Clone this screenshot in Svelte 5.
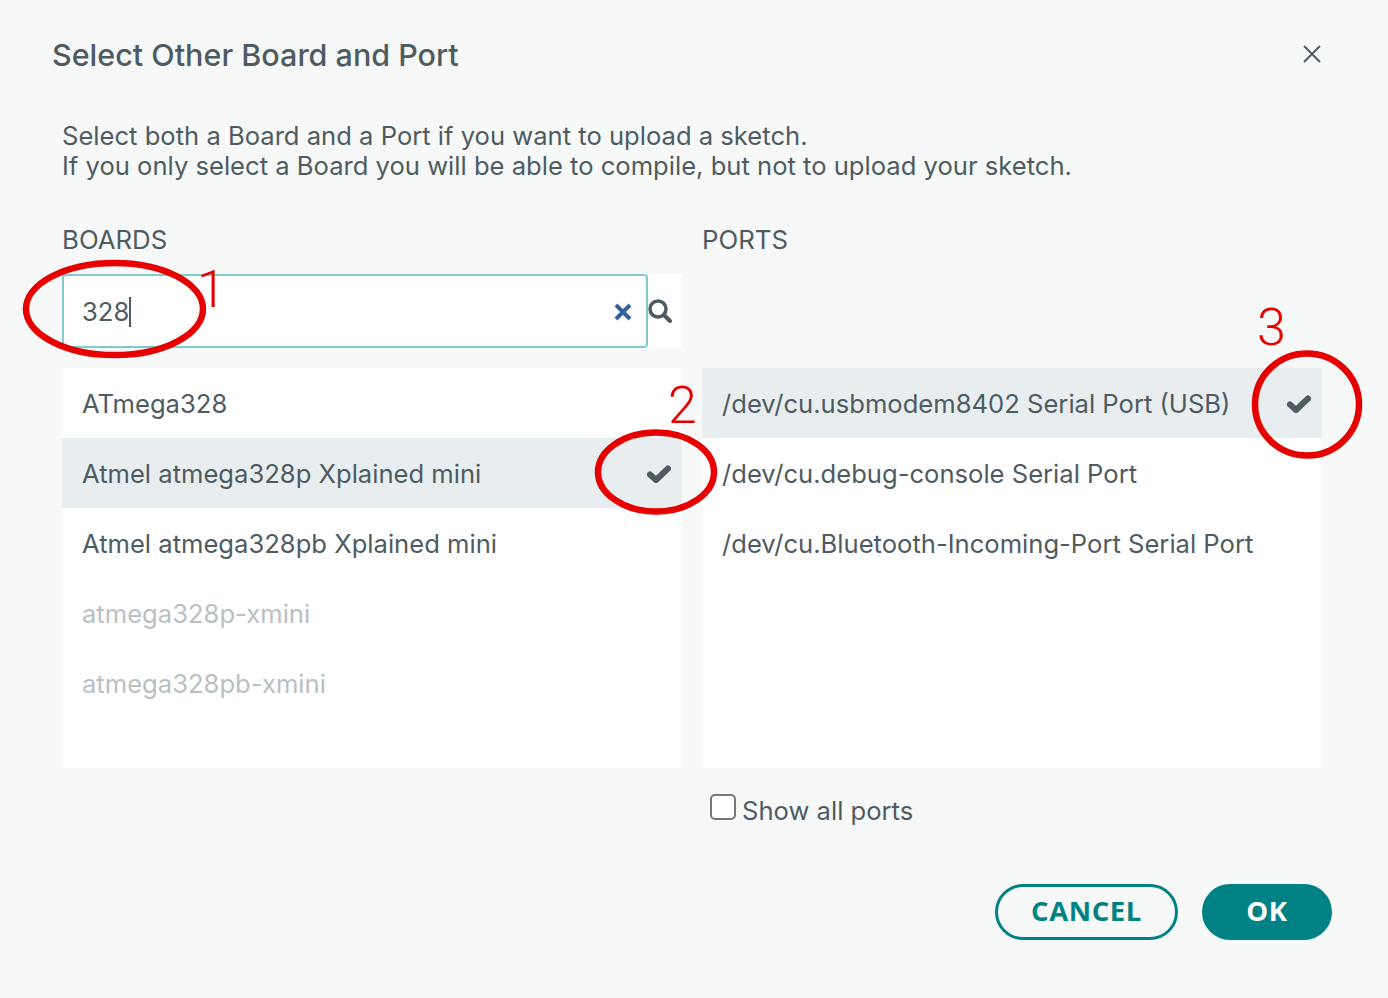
<script>
  const boards = [
    { name: "ATmega328" },
    { name: "Atmel atmega328p Xplained mini", selected: true },
    { name: "Atmel atmega328pb Xplained mini" },
    { name: "atmega328p-xmini", missing: true },
    { name: "atmega328pb-xmini", missing: true },
  ];
  const ports = [
    { name: "/dev/cu.usbmodem8402 Serial Port (USB)", selected: true },
    { name: "/dev/cu.debug-console Serial Port" },
    { name: "/dev/cu.Bluetooth-Incoming-Port Serial Port" },
  ];
  const marks = [
    { label: "1", x: 197, y: 307, cx: 114.5, cy: 309, rx: 88.5, ry: 46 },
    { label: "2", x: 668, y: 423, cx: 656, cy: 472, rx: 58, ry: 39.5 },
    { label: "3", x: 1257, y: 345, cx: 1307, cy: 404.5, rx: 52, ry: 51 },
  ];
</script>

{#snippet check()}
  <svg class="check" viewBox="0 0 24 18" aria-hidden="true">
    <path d="M3 9.5 9 15 21 3.5" fill="none" stroke="currentColor" stroke-width="6" stroke-linejoin="round" stroke-linecap="round" />
  </svg>
{/snippet}

<div class="dialog">
  <header class="head">
    <h1>Select Other Board and Port</h1>
    <button type="button" class="close" aria-label="Close">
      <svg viewBox="0 0 20 20" aria-hidden="true">
        <path d="M2 2 18 18M18 2 2 18" fill="none" stroke="currentColor" stroke-width="2" />
      </svg>
    </button>
  </header>

  <div class="body">
    <p class="intro">
      Select both a Board and a Port if you want to upload a sketch.<br />
      If you only select a Board you will be able to compile, but not to upload your sketch.
    </p>

    <div class="columns">
      <section class="col">
        <h2>BOARDS</h2>
        <div class="search">
          <div class="field">
            <span class="value">328</span>
            <svg class="clear" viewBox="0 0 18 18" aria-hidden="true">
              <path d="M2 2 16 16M16 2 2 16" fill="none" stroke="#34609c" stroke-width="4" />
            </svg>
          </div>
          <svg class="glass" viewBox="0 0 24 24" aria-hidden="true">
            <circle cx="10" cy="10" r="8" fill="none" stroke="currentColor" stroke-width="3.5" />
            <path d="M16 16 22 22" stroke="currentColor" stroke-width="4" stroke-linecap="round" />
          </svg>
        </div>
        <ul class="list">
          {#each boards as board}
            <li class:selected={board.selected} class:missing={board.missing}>
              <span>{board.name}</span>
              {#if board.selected}{@render check()}{/if}
            </li>
          {/each}
        </ul>
      </section>

      <section class="col">
        <h2>PORTS</h2>
        <div class="spacer"></div>
        <ul class="list">
          {#each ports as port}
            <li class:selected={port.selected}>
              <span>{port.name}</span>
              {#if port.selected}{@render check()}{/if}
            </li>
          {/each}
        </ul>
        <label class="show-all">
          <span class="box"></span>
          Show all ports
        </label>
      </section>
    </div>
  </div>

  <footer class="actions">
    <button type="button" class="btn secondary">CANCEL</button>
    <button type="button" class="btn primary">OK</button>
  </footer>

  <svg class="marks" viewBox="0 0 1388 998" aria-hidden="true">
    {#each marks as m}
      <ellipse cx={m.cx} cy={m.cy} rx={m.rx} ry={m.ry} />
      <text x={m.x} y={m.y}>{m.label}</text>
    {/each}
  </svg>
</div>

<style>
  :global(body) {
    margin: 0;
    background: #f7f9f9;
  }

  .dialog {
    position: relative;
    box-sizing: border-box;
    width: 1388px;
    height: 998px;
    padding: 36px 56px 0 52px;
    background: #f7f9f9;
    color: #4e5b61;
    font-family: Inter, "Liberation Sans", sans-serif;
    font-size: 25.6px;
  }

  .head {
    display: flex;
    justify-content: space-between;
    align-items: center;
    height: 38px;
  }

  h1 {
    margin: -2px 0 0;
    font-size: 30.5px;
    font-weight: 500;
  }

  .close {
    display: flex;
    width: 20px;
    height: 20px;
    margin: -2px 10px 0 0;
    padding: 0;
    border: none;
    background: none;
    color: #4e5b61;
  }

  .body {
    padding: 0 10px;
  }

  .intro {
    margin: 47px 0 0;
    line-height: 30px;
  }

  .columns {
    display: grid;
    grid-template-columns: 620px 620px;
    gap: 20px;
    margin-top: 44px;
  }

  h2 {
    margin: 0 0 19px;
    font-size: 25.8px;
    font-weight: 400;
    line-height: 30px;
  }

  .search {
    display: flex;
    align-items: center;
    height: 74px;
    background: #fff;
  }

  .field {
    box-sizing: border-box;
    flex: 0 0 586px;
    display: flex;
    justify-content: space-between;
    align-items: center;
    height: 74px;
    padding: 2px 14px 0 18px;
    border: 2px solid #7fcbcd;
    border-radius: 4px;
  }

  .value {
    border-right: 2px solid #4e5b61;
    line-height: 30px;
  }

  .clear {
    width: 18px;
    height: 18px;
  }

  .glass {
    width: 24px;
    height: 24px;
  }

  .spacer {
    height: 74px;
  }

  .list {
    box-sizing: border-box;
    height: 400px;
    margin: 20px 0 0;
    padding: 0;
    list-style: none;
    background: #fff;
  }

  .list li {
    display: flex;
    justify-content: space-between;
    align-items: center;
    box-sizing: border-box;
    height: 70px;
    padding: 0 11px 0 20px;
  }

  .list li.selected {
    background: #e8eef0;
  }

  .list li.missing {
    color: #b9bfc2;
  }

  .check {
    width: 24px;
    height: 18px;
    margin-top: 1px;
  }

  .show-all {
    display: flex;
    align-items: center;
    gap: 6px;
    height: 30px;
    margin: 27px 0 0 8px;
  }

  .box {
    box-sizing: border-box;
    width: 26px;
    height: 26px;
    margin-top: -6px;
    border: 2px solid #777;
    border-radius: 5px;
    background: #fff;
  }

  .actions {
    display: flex;
    justify-content: flex-end;
    gap: 24px;
    margin-top: 59px;
  }

  .btn {
    box-sizing: border-box;
    height: 56px;
    padding: 0 0 3px;
    border-radius: 28px;
    border: 3.5px solid #008184;
    font-family: "Open Sans", sans-serif;
    font-size: 27.5px;
    font-weight: 700;
    letter-spacing: 0.6px;
  }

  .secondary {
    width: 183px;
    background: transparent;
    color: #008184;
  }

  .primary {
    width: 130px;
    background: #008184;
    color: #fff;
  }

  .marks {
    position: absolute;
    inset: 0;
    width: 1388px;
    height: 998px;
    pointer-events: none;
  }

  .marks ellipse {
    fill: none;
    stroke: #e60000;
    stroke-width: 6.5;
  }

  .marks text {
    fill: #e60000;
    font-family: Roboto, sans-serif;
    font-weight: 300;
    font-size: 52px;
  }
</style>
